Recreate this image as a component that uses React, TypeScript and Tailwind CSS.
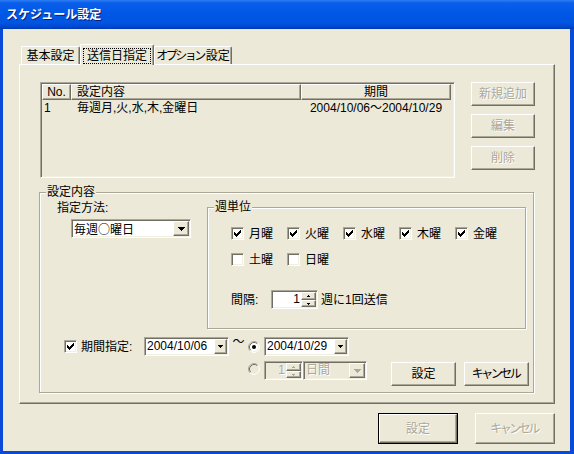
import clsx from 'clsx';
import type { ReactNode } from 'react';

const FONT = "font-['Liberation_Sans','Noto_Sans_CJK_JP',sans-serif]";
const CJK = "font-['Noto_Sans_CJK_JP',sans-serif]";

const raised =
  'bg-[#ece9d8] border border-t-white border-l-white border-r-[#716f64] border-b-[#716f64] shadow-[inset_-1px_-1px_0_#aca899]';
const sunken =
  'border border-t-[#aca899] border-l-[#aca899] border-r-white border-b-white shadow-[inset_1px_1px_0_#716f64,inset_-1px_-1px_0_#f1efe2]';
const etched = 'border border-[#aca899] shadow-[inset_1px_1px_0_#fff,1px_1px_0_#fff]';
const dimText = 'text-[#aca899] [text-shadow:1px_1px_0_#fff]';

// katakana in the original UI font is narrower than full width
function Kana({ children }: { children: ReactNode }) {
  return <span className="tracking-[-2.5px] mr-[2px]">{children}</span>;
}

function Button({
  label,
  disabled,
  primary,
  className,
}: {
  label: ReactNode;
  disabled?: boolean;
  primary?: boolean;
  className: string;
}) {
  return (
    <div className={clsx('flex shrink-0', primary && 'border border-black', className)}>
      <div className={clsx(raised, 'flex flex-1 items-center justify-center whitespace-nowrap', disabled && dimText)}>
        {label}
      </div>
    </div>
  );
}

function Arrow({ small, disabled }: { small?: boolean; disabled?: boolean }) {
  const fill = disabled ? '#aca899' : '#000';
  if (small) {
    return (
      <svg width="5" height="3" viewBox="0 0 5 3" shapeRendering="crispEdges">
        <path d="M0 0h5v1H0z M1 1h3v1H1z M2 2h1v1H2z" fill={fill} />
      </svg>
    );
  }
  return (
    <svg width="7" height="4" viewBox="0 0 7 4" shapeRendering="crispEdges">
      <path d="M0 0h7v1H0z M1 1h5v1H1z M2 2h3v1H2z M3 3h1v1H3z" fill={fill} />
    </svg>
  );
}

function Combo({
  children,
  className,
  btn,
  small,
  disabled,
}: {
  children: ReactNode;
  className: string;
  btn: string;
  small?: boolean;
  disabled?: boolean;
}) {
  return (
    <div className={clsx(sunken, 'flex h-[19px] p-[1px] shrink-0', disabled ? 'bg-[#ece9d8]' : 'bg-white', className)}>
      <span className={clsx('flex-1 pl-[1px] leading-[15px] whitespace-nowrap overflow-hidden', disabled && dimText)}>
        {children}
      </span>
      <span className={clsx(raised, 'flex items-center justify-center', btn)}>
        <Arrow small={small} disabled={disabled} />
      </span>
    </div>
  );
}

function Spin({ className, disabled }: { className: string; disabled?: boolean }) {
  const fill = disabled ? '#aca899' : '#000';
  return (
    <div className={clsx(sunken, 'flex h-[19px] p-[1px] shrink-0', disabled ? 'bg-[#ece9d8]' : 'bg-white', className)}>
      <span className={clsx('flex-1 text-right pr-[1px] leading-[15px]', disabled && dimText)}>1</span>
      <span className="w-[15px] flex flex-col">
        <span className={clsx(raised, 'h-[8px] flex items-center justify-center')}>
          <svg width="3" height="2" viewBox="0 0 3 2" shapeRendering="crispEdges">
            <path d="M1 0h1v1H1z M0 1h3v1H0z" fill={fill} />
          </svg>
        </span>
        <span className={clsx(raised, 'h-[7px] flex items-center justify-center')}>
          <svg width="3" height="2" viewBox="0 0 3 2" shapeRendering="crispEdges">
            <path d="M0 0h3v1H0z M1 1h1v1H1z" fill={fill} />
          </svg>
        </span>
      </span>
    </div>
  );
}

function Check({ checked }: { checked?: boolean }) {
  return (
    <span className="w-[13px] h-[13px] shrink-0 flex items-center justify-center bg-white border border-t-[#aca899] border-l-[#aca899] border-r-white border-b-white shadow-[inset_1px_1px_0_#716f64,inset_-1px_-1px_0_#f1efe2]">
      {checked && (
        <svg width="7" height="7" viewBox="0 0 7 7" shapeRendering="crispEdges">
          <path
            d="M6 0h1v1H6z M5 1h2v1H5z M0 2h1v1H0z M4 2h3v1H4z M0 3h2v1H0z M3 3h3v1H3z M0 4h5v1H0z M1 5h3v1H1z M2 6h1v1H2z"
            fill="#000"
          />
        </svg>
      )}
    </span>
  );
}

function Radio({ checked, disabled }: { checked?: boolean; disabled?: boolean }) {
  return (
    <svg width="12" height="12" viewBox="0 0 12 12" className="shrink-0">
      <circle cx="6" cy="6" r="5" fill={disabled ? '#ece9d8' : '#fff'} />
      <path d="M2.11 9.89A5.5 5.5 0 0 1 9.89 2.11" stroke="#aca899" fill="none" />
      <path d="M9.89 2.11A5.5 5.5 0 0 1 2.11 9.89" stroke="#fff" fill="none" />
      <path d="M2.82 9.18A4.5 4.5 0 0 1 9.18 2.82" stroke="#716f64" fill="none" />
      <path d="M9.18 2.82A4.5 4.5 0 0 1 2.82 9.18" stroke="#f1efe2" fill="none" />
      {checked && <circle cx="6" cy="6" r="2" fill="#000" />}
    </svg>
  );
}

function CheckItem({ label, checked }: { label: string; checked?: boolean }) {
  return (
    <div className="flex items-center w-[56px]">
      <Check checked={checked} />
      <span className="ml-[5px] whitespace-nowrap">{label}</span>
    </div>
  );
}

function GroupBox({ label, className, children }: { label: string; className: string; children: ReactNode }) {
  return (
    <div className={clsx(etched, 'relative shrink-0', className)}>
      <span className="absolute -top-[8px] left-[6px] px-[1px] bg-[#ece9d8] leading-[14px]">{label}</span>
      {children}
    </div>
  );
}

function Tab({ label, active, className }: { label: ReactNode; active?: boolean; className: string }) {
  return (
    <div
      className={clsx(
        'flex items-center justify-center bg-[#ece9d8] border-t border-l border-r border-t-white border-l-white border-r-[#716f64] shadow-[inset_-1px_0_0_#aca899] rounded-t-[2px] whitespace-nowrap',
        active ? 'relative z-10 h-[21px] -mb-[1px] pt-[1px]' : 'h-[18px]',
        className,
      )}
    >
      {active ? (
        <span className="border border-dotted border-black px-[3px] leading-[14px]">{label}</span>
      ) : (
        label
      )}
    </div>
  );
}

function HeaderCell({ children, className }: { children: ReactNode; className: string }) {
  return (
    <div
      className={clsx(
        'h-[16px] flex items-center bg-[#ece9d8] border border-t-white border-l-white border-r-[#716f64] border-b-[#716f64] shadow-[inset_-1px_-1px_0_#aca899] whitespace-nowrap',
        className,
      )}
    >
      {children}
    </div>
  );
}

export default function App() {
  return (
    <div className={clsx(FONT, 'w-[574px] h-[454px] flex flex-col bg-[#0a4ad8] text-[12px] leading-[14px] text-black select-none')}>
      {/* title bar */}
      <div className="h-[29px] shrink-0 flex items-center pl-[6px] bg-[linear-gradient(180deg,#2f7df4_0%,#0a5fea_10%,#0058e6_45%,#0054e0_80%,#0048d0_92%,#003aae_100%)]">
        <span className="text-white font-bold text-[12px] [text-shadow:1px_1px_0_#0a1e7a]">スケジュール設定</span>
      </div>

      <div className="flex-1 ml-[3px] mr-[4px] mb-[3px] bg-[#ece9d8] flex flex-col pt-[15px] pl-[16px]">
        {/* tabs */}
        <div className="flex items-end h-[20px]">
          <Tab label="基本設定" className="ml-[2px] w-[59px]" />
          <Tab label="送信日指定" active className="w-[74px]" />
          <Tab
            label={
              <>
                <Kana>オプション</Kana>設定
              </>
            }
            className="w-[78px]"
          />
        </div>

        <div className="w-[536px] h-[340px] shrink-0 bg-[#ece9d8] border border-t-white border-l-white border-r-[#716f64] border-b-[#716f64] shadow-[inset_-1px_-1px_0_#aca899] flex flex-col">
          {/* list + side buttons */}
          <div className="flex mt-[17px] ml-[20px]">
            <div className={clsx(sunken, 'w-[415px] h-[96px] p-[1px] bg-[#ece9d8] flex flex-col')}>
              <div className="flex">
                <HeaderCell className="w-[29px] justify-center">No.</HeaderCell>
                <HeaderCell className="w-[230px] pl-[5px]">設定内容</HeaderCell>
                <HeaderCell className="w-[150px] justify-center">期間</HeaderCell>
              </div>
              <div className="flex h-[16px] items-center whitespace-nowrap">
                <span className="w-[29px] pl-[2px]">1</span>
                <span className="w-[230px] pl-[6px]">毎週月,火,水,木,金曜日</span>
                <span className="w-[150px] text-center">2004/10/06～2004/10/29</span>
              </div>
            </div>
            <div className="ml-[16px] flex flex-col gap-[8px]">
              <Button label="新規追加" disabled className="w-[64px] h-[24px]" />
              <Button label="編集" disabled className="w-[64px] h-[24px]" />
              <Button label="削除" disabled className="w-[64px] h-[24px]" />
            </div>
          </div>

          {/* 設定内容 group */}
          <GroupBox label="設定内容" className="mt-[14px] ml-[19px] w-[495px] h-[201px]">
            <div className="flex">
              <div className="w-[167px] shrink-0 pl-[17px] pt-[8px] flex flex-col">
                <span>指定方法:</span>
                <Combo className="mt-[4px] ml-[14px] w-[120px]" btn="w-[16px]">
                  毎週<span className={CJK}>○</span>曜日
                </Combo>
              </div>
              <GroupBox label="週単位" className="mt-[14px] w-[319px] h-[122px]">
                <div className="pl-[23px] pt-[19px] flex flex-col">
                  <div className="flex h-[13px]">
                    <CheckItem label="月曜" checked />
                    <CheckItem label="火曜" checked />
                    <CheckItem label="水曜" checked />
                    <CheckItem label="木曜" checked />
                    <CheckItem label="金曜" checked />
                  </div>
                  <div className="flex h-[13px] mt-[13px]">
                    <CheckItem label="土曜" />
                    <CheckItem label="日曜" />
                  </div>
                  <div className="flex items-center h-[19px] mt-[24px]">
                    <span className="w-[40px]">間隔:</span>
                    <Spin className="w-[47px]" />
                    <span className="ml-[3px] whitespace-nowrap">週に1回送信</span>
                  </div>
                </div>
              </GroupBox>
            </div>

            {/* period row */}
            <div className="flex items-center h-[19px] mt-[8px] pl-[24px]">
              <Check checked />
              <span className="ml-[4px] w-[63px] whitespace-nowrap">期間指定:</span>
              <Combo className="w-[85px]" btn="w-[13px]" small>
                2004/10/06
              </Combo>
              <span className="w-[19px] self-start leading-[11px] text-center">～</span>
              <Radio checked />
              <Combo className="ml-[4px] w-[85px]" btn="w-[13px]" small>
                2004/10/29
              </Combo>
            </div>

            <div className="flex items-start h-[25px] mt-[5px]">
              <div className="ml-[208px] mt-[2px]">
                <Radio disabled />
              </div>
              <Spin className="ml-[4px] w-[39px]" disabled />
              <Combo className="w-[64px]" btn="w-[16px]" disabled>
                日間
              </Combo>
              <Button label="設定" className="ml-[24px] mt-[1px] w-[65px] h-[24px]" />
              <Button label={<Kana>キャンセル</Kana>} className="ml-[8px] mt-[1px] w-[65px] h-[24px]" />
            </div>
          </GroupBox>
        </div>

        {/* dialog buttons */}
        <div className="w-[536px] flex justify-end gap-[17px] mt-[9px]">
          <Button label="設定" disabled primary className="w-[80px] h-[31px]" />
          <Button label={<Kana>キャンセル</Kana>} disabled className="w-[80px] h-[31px]" />
        </div>
      </div>
    </div>
  );
}
